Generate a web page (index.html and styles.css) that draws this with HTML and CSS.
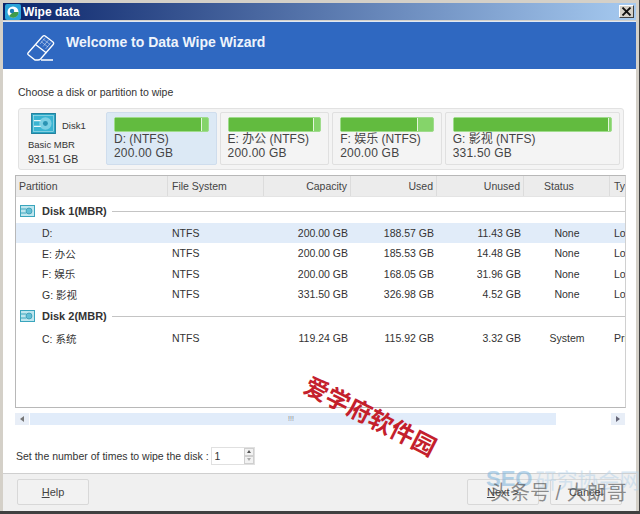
FILE: index.html
```html
<!DOCTYPE html>
<html lang="en">
<head>
    <meta charset="UTF-8">
    <title>Wipe data</title>
    <link rel="stylesheet" href="styles.css">
</head>
<body>
    <div class="window">
        <div class="titlebar">
            <svg class="app-icon" width="16" height="16" viewBox="0 0 16 16">
                <rect width="16" height="16" rx="2" fill="#2aa3d8"/>
                <circle cx="8" cy="8" r="5.5" fill="#fff"/>
                <path d="M8 8 L13.5 8 A5.5 5.5 0 0 1 4 12 Z" fill="#3f9c4a"/>
                <circle cx="7" cy="7" r="2.2" fill="#1d7fb5"/>
            </svg>
            <span class="title-text">Wipe data</span>
            <div class="close-btn">
                <svg width="11" height="9" viewBox="0 0 11 9"><path d="M1.5 0.5 L9.5 8.5 M9.5 0.5 L1.5 8.5" stroke="#111" stroke-width="1.8" fill="none"/></svg>
            </div>
        </div>

        <div class="banner">
            <svg class="eraser" width="28" height="30" viewBox="0 0 28 30" fill="none" stroke="#fff" stroke-width="1.3">
                <path d="M1 20 L15.5 3.5 Q17 2 18.5 3.2 L26 9 Q27.3 10.2 26 11.7 L13.5 26 Q12.5 27 11 27 L8 27 L1.6 22 Q0.3 21 1 20 Z"/>
                <path d="M8.5 11.5 L19.5 20"/>
                <path d="M14 27 L26 27" stroke-width="1.5"/>
                <path d="M16 6 L23 11.5 M14 8.5 L21 14 M18.5 4.5 L13 11 M21.5 7 L16 13.5 M24 9.5 L18.5 16" stroke-width="0.6" opacity="0.75"/>
            </svg>
            <span class="banner-text">Welcome to Data Wipe Wizard</span>
        </div>

        <div class="content">
            <p class="choose">Choose a disk or partition to wipe</p>

            <div class="disk-map">
                <div class="disk-tile">
                    <div class="disk-top">
                        <svg width="25" height="21" viewBox="0 0 26 22">
                            <rect x="0.5" y="0.5" width="25" height="21" fill="#2ba6c4" stroke="#1f7f9c"/>
                            <rect x="2.5" y="2.5" width="21" height="17" fill="#39b4d2" stroke="#bfe8f2" stroke-width="0.6"/>
                            <circle cx="15" cy="11" r="6.5" fill="#7cd0e4"/>
                            <circle cx="15" cy="11" r="2.6" fill="#2a93b3"/>
                            <path d="M3 8 H10 M3 14 H10" stroke="#e4f6fa" stroke-width="1.3"/>
                        </svg>
                        <span>Disk1</span>
                    </div>
                    <div class="disk-type">Basic MBR</div>
                    <div class="disk-size">931.51 GB</div>
                </div>
                <div class="part selected part-d">
                    <div class="bar"><div class="bar-used" style="width: 94%"></div></div>
                    <div class="part-name">D: (NTFS)</div>
                    <div class="part-size">200.00 GB</div>
                </div>
                <div class="part part-e">
                    <div class="bar"><div class="bar-used" style="width: 93%"></div></div>
                    <div class="part-name">E: 办公 (NTFS)</div>
                    <div class="part-size">200.00 GB</div>
                </div>
                <div class="part part-f">
                    <div class="bar"><div class="bar-used" style="width: 84%"></div></div>
                    <div class="part-name">F: 娱乐 (NTFS)</div>
                    <div class="part-size">200.00 GB</div>
                </div>
                <div class="part part-g">
                    <div class="bar"><div class="bar-used" style="width: 99%"></div></div>
                    <div class="part-name">G: 影视 (NTFS)</div>
                    <div class="part-size">331.50 GB</div>
                </div>
            </div>

            <div class="table">
                <div class="row head">
                    <div class="cell first-head">Partition</div>
                    <div class="cell">File System</div>
                    <div class="cell num">Capacity</div>
                    <div class="cell num">Used</div>
                    <div class="cell num">Unused</div>
                    <div class="cell status-head">Status</div>
                    <div class="cell last">Type</div>
                </div>

                <div class="group first">
                    <svg width="15" height="12" viewBox="0 0 15 12"><rect x="0.5" y="0.5" width="14" height="11" fill="#bfe6ee" stroke="#3aa5bd"/><circle cx="9" cy="6" r="3" fill="#63bfd5" stroke="#2f94ad" stroke-width="0.7"/><path d="M1 4 H6 M1 8 H6" stroke="#3aa5bd"/></svg>
                    <b>Disk 1(MBR)</b>
                    <span class="group-line"></span>
                </div>
                <div class="row selected">
                    <div class="cell name">D:</div><div class="cell">NTFS</div><div class="cell num">200.00 GB</div><div class="cell num">188.57 GB</div><div class="cell num">11.43 GB</div><div class="cell mid">None</div><div class="cell last">Logical</div>
                </div>
                <div class="row">
                    <div class="cell name">E: 办公</div><div class="cell">NTFS</div><div class="cell num">200.00 GB</div><div class="cell num">185.53 GB</div><div class="cell num">14.48 GB</div><div class="cell mid">None</div><div class="cell last">Logical</div>
                </div>
                <div class="row">
                    <div class="cell name">F: 娱乐</div><div class="cell">NTFS</div><div class="cell num">200.00 GB</div><div class="cell num">168.05 GB</div><div class="cell num">31.96 GB</div><div class="cell mid">None</div><div class="cell last">Logical</div>
                </div>
                <div class="row">
                    <div class="cell name">G: 影视</div><div class="cell">NTFS</div><div class="cell num">331.50 GB</div><div class="cell num">326.98 GB</div><div class="cell num">4.52 GB</div><div class="cell mid">None</div><div class="cell last">Logical</div>
                </div>

                <div class="group">
                    <svg width="15" height="12" viewBox="0 0 15 12"><rect x="0.5" y="0.5" width="14" height="11" fill="#bfe6ee" stroke="#3aa5bd"/><circle cx="9" cy="6" r="3" fill="#63bfd5" stroke="#2f94ad" stroke-width="0.7"/><path d="M1 4 H6 M1 8 H6" stroke="#3aa5bd"/></svg>
                    <b>Disk 2(MBR)</b>
                    <span class="group-line"></span>
                </div>
                <div class="row">
                    <div class="cell name">C: 系统</div><div class="cell">NTFS</div><div class="cell num">119.24 GB</div><div class="cell num">115.92 GB</div><div class="cell num">3.32 GB</div><div class="cell mid">System</div><div class="cell last">Primary</div>
                </div>
            </div>

            <div class="scrollbar">
                <div class="scroll-btn"><span class="arrow-left"></span></div>
                <div class="scroll-track">
                    <div class="scroll-thumb">
                        <span class="grip">!!!</span>
                    </div>
                </div>
                <div class="scroll-btn"><span class="arrow-right"></span></div>
            </div>

            <div class="times">
                <span>Set the number of times to wipe the disk :</span>
                <div class="spin">
                    <span class="spin-value">1</span>
                    <div class="spin-btns">
                        <div class="spin-btn"><span class="arrow-up"></span></div>
                        <div class="spin-btn"><span class="arrow-down"></span></div>
                    </div>
                </div>
            </div>
        </div>

        <div class="footer">
            <button class="btn"><u>H</u>elp</button>
            <div class="footer-right">
                <button class="btn"><u>N</u>ext &gt;</button>
                <button class="btn">Cancel</button>
            </div>
        </div>
    </div>

    <div class="mark-red">爱学府软件园</div>
    <div class="mark-seo"><span class="seo">SEO</span><span class="seo-cn">研究协会网</span></div>
    <div class="mark-toutiao">头条号 / 大朗哥</div>
</body>
</html>
```

FILE: styles.css
```css
* {
    box-sizing: border-box;
}
html, body {
    margin: 0;
    padding: 0;
    height: 514px;
    overflow: hidden;
}
body {
    position: relative;
    background-color: #fff;
    font-family: "Liberation Sans", "Noto Sans CJK SC", sans-serif;
    font-size: 10.5px;
    color: #333;
}
.window {
    width: 640px;
    height: 514px;
    display: flex;
    flex-direction: column;
    padding: 3px 3px 0 3px;
    background-color: #d4d0c8;
    border-bottom: 3px solid #404040;
    border-right: 1px solid #404040;
}

/* title bar */
.titlebar {
    height: 17px;
    flex-shrink: 0;
    display: flex;
    align-items: center;
    gap: 2px;
    padding: 0 2px;
    background: linear-gradient(to right, #0a246a, #a6caf0);
    color: #fff;
}
.title-text {
    font-size: 12px;
    font-weight: bold;
}
.close-btn {
    margin-left: auto;
    width: 15px;
    height: 13px;
    display: flex;
    align-items: center;
    justify-content: center;
    background-color: #d4d0c8;
    border: 1px solid;
    border-color: #fff #404040 #404040 #fff;
}

/* blue banner */
.banner {
    height: 48px;
    flex-shrink: 0;
    margin-top: 1px;
    display: flex;
    align-items: center;
    padding: 0 0 2px 24px;
    background-color: #2f68c1;
    border-top: 1px solid #dfe8f5;
}
.eraser {
    margin-top: 6px;
}
.banner-text {
    margin-left: 11px;
    margin-bottom: 6px;
    color: #eef4fc;
    font-size: 14px;
    font-weight: bold;
}

/* main area */
.content {
    flex: 1;
    min-height: 0;
    padding: 0 10px 0 11px;
    background-color: #fff;
}
.choose {
    margin: 17px 0 0 4px;
    height: 13px;
    line-height: 13px;
}

.disk-map {
    width: 606px;
    height: 62px;
    margin: 9px 0 0 4px;
    display: flex;
    align-items: flex-start;
    gap: 3px;
    padding: 3px 3px 0 0;
    background-color: #f4f4f4;
    border: 1px solid #e2e2e2;
    border-radius: 3px;
}
.disk-tile {
    width: 84px;
    height: 54px;
    padding: 1px 0 0 9px;
    flex-shrink: 0;
    font-size: 9.5px;
}
.disk-top {
    display: flex;
    align-items: flex-end;
    gap: 6px;
    padding-left: 3px;
    height: 21px;
}
.disk-top span {
    margin-bottom: 3px;
}
.disk-type {
    margin-top: 5px;
    line-height: 12px;
}
.disk-size {
    margin-top: 2px;
    line-height: 13px;
    font-size: 10.5px;
}
.part {
    height: 53px;
    padding: 4px 7px 0 7px;
    background-color: #f4f4f4;
    border: 1px solid #e0e0e0;
    border-radius: 2px;
    font-size: 12px;
    line-height: 14px;
}
.part.selected {
    background-color: #dce9f5;
    border-color: #cfdded;
}
.part-d { width: 111px; }
.part-e { width: 110px; }
.part-f { width: 110px; }
.part-g { width: 176px; }
.bar {
    height: 15px;
    background-color: #85d46a;
    border: 1px solid #9fdc8c;
    border-radius: 2px;
}
.bar-used {
    height: 100%;
    background-color: #62bb3f;
    border-right: 1px solid #e4f5dc;
}
.part-name, .part-size {
    color: #444;
    white-space: nowrap;
}
.part-size {
    letter-spacing: 0.2px;
}

/* partition list */
.table {
    width: 611px;
    height: 233px;
    margin: 5px 0 0 1px;
    background-color: #fff;
    border: 1px solid #b8b8b8;
    border-right-color: #d0d0d0;
    overflow: hidden;
}
.row {
    height: 20.33px;
    display: grid;
    grid-template-columns: 152px 96px 87px 86px 87px 86px 15px;
    align-items: center;
}
.row.head {
    height: 21px;
    background-color: #ececec;
    border-bottom: 1px solid #e4e4e4;
}
.head .cell {
    height: 100%;
    line-height: 20px;
    border-right: 1px solid #dcdcdc;
    color: #444;
}
.head .last {
    border-right: none;
}
.cell {
    padding: 0 4px;
    white-space: nowrap;
    overflow: hidden;
}
.cell.first-head {
    padding-left: 3px;
}
.cell.name {
    padding-left: 26px;
}
.cell.num {
    text-align: right;
    padding-right: 3px;
}
.cell.mid {
    text-align: center;
}
.status-head {
    padding-left: 20px;
}
.cell.last {
    padding: 0 0 0 4px;
}
.row.selected {
    background-color: #e1ecf9;
}
.group {
    height: 22px;
    margin-top: 1px;
    margin-bottom: 1px;
    display: flex;
    align-items: center;
    padding-left: 4px;
    gap: 7px;
}
.group.first {
    margin-top: 3px;
}
.group b {
    color: #333;
    font-size: 11px;
    white-space: nowrap;
}
.group-line {
    flex: 1;
    height: 1px;
    margin-left: -2px;
    background-color: #c4c4c4;
}

.scrollbar {
    width: 610px;
    height: 13px;
    margin: 4px 0 0 1px;
    display: flex;
    align-items: center;
    gap: 1px;
}
.scroll-btn {
    width: 14px;
    height: 12px;
    flex-shrink: 0;
    display: flex;
    align-items: center;
    justify-content: center;
    background-color: #e8eef7;
}
.arrow-left {
    border: 3px solid transparent;
    border-left: none;
    border-right: 4px solid #777;
}
.arrow-right {
    border: 3px solid transparent;
    border-right: none;
    border-left: 4px solid #667;
}
.scroll-track {
    flex: 1;
    height: 12px;
    background-color: #fff;
}
.scroll-thumb {
    width: 526px;
    height: 12px;
    background-color: #e1ecfa;
    display: flex;
    align-items: center;
    padding-left: 258px;
}
.grip {
    font-size: 7px;
    color: #888;
}

.times {
    display: flex;
    align-items: center;
    gap: 2px;
    height: 19px;
    margin: 21px 0 0 2px;
}
.spin {
    width: 44px;
    height: 18px;
    display: flex;
    justify-content: space-between;
    padding-left: 3px;
    border: 1px solid #e0e0e0;
    background-color: #fff;
    line-height: 16px;
}
.spin-btns {
    width: 10px;
    display: flex;
    flex-direction: column;
}
.spin-btn {
    flex: 1;
    display: flex;
    align-items: center;
    justify-content: center;
    background-color: #f2f2f2;
    border: 1px solid #cfcfcf;
}
.arrow-up {
    border: 2px solid transparent;
    border-top: none;
    border-bottom: 3px solid #555;
}
.arrow-down {
    border: 2px solid transparent;
    border-bottom: none;
    border-top: 3px solid #aaa;
}

/* footer */
.footer {
    height: 38px;
    flex-shrink: 0;
    display: flex;
    justify-content: space-between;
    padding: 5px 14px 0 14px;
    background-color: #f0f0f0;
    border-top: 1px solid #cfcfcf;
}
.footer-right {
    display: flex;
    gap: 11px;
}
.btn {
    width: 72px;
    height: 26px;
    padding: 0;
    background-color: #f2f2f2;
    border: 1px solid #d8d8d8;
    border-radius: 2px;
    color: #444;
    font-family: inherit;
    font-size: 11px;
}

/* watermarks lying over the screenshot */
.mark-red {
    position: absolute;
    left: 298px;
    top: 402px;
    transform: rotate(27deg);
    color: #c4202c;
    font-size: 24px;
    font-weight: bold;
    line-height: 30px;
    white-space: nowrap;
}
.mark-seo {
    position: absolute;
    left: 486px;
    top: 464px;
    display: flex;
    align-items: center;
    gap: 3px;
    white-space: nowrap;
    opacity: 0.55;
}
.seo {
    color: #7db4dc;
    font-size: 22px;
    font-weight: bold;
}
.seo-cn {
    color: #b9d4ea;
    font-size: 21px;
}
.mark-toutiao {
    position: absolute;
    left: 490px;
    top: 481px;
    color: rgba(70, 70, 70, 0.6);
    font-size: 20px;
    line-height: 24px;
    white-space: nowrap;
}
```
